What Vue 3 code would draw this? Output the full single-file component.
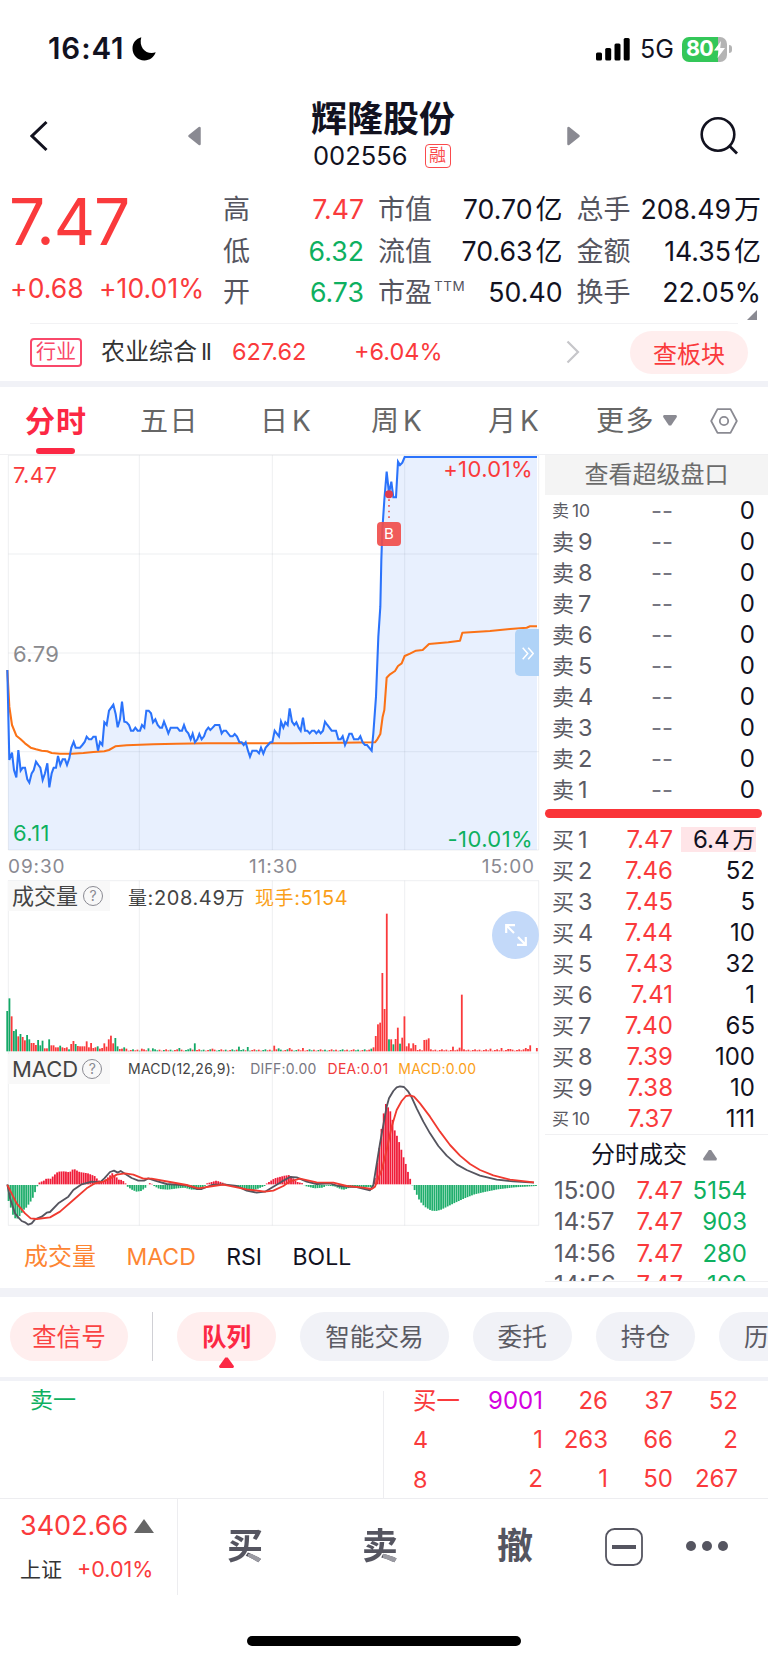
<template>
  <div class="page">
    <!-- Status bar -->
    <div class="status">
      <span class="clock">16:41</span>
      <svg class="moon" width="24" height="24" viewBox="0 0 24 24">
        <path d="M9.300 0.300C4 1.600 0.500 6 0.500 11.600c0 6.700 5.200 11.900 11.900 11.900 5.200 0 9.700-3.300 11.300-8.200C15.500 18.500 6.200 11.500 9.300.3z" fill="#000" />
      </svg>
      <svg class="signal" width="34" height="23" viewBox="0 0 34 23">
        <rect x="0" y="14.500" width="6" height="8" rx="1.500" />
        <rect x="9.200" y="10" width="6" height="12.500" rx="1.500" />
        <rect x="18.500" y="5.500" width="6" height="17" rx="1.500" />
        <rect x="27.700" y="0" width="6" height="22.500" rx="1.500" />
      </svg>
      <span class="network">5G</span>
      <span class="battery">
        80<svg width="11" height="17" viewBox="0 0 11 17"><path d="M7 0L0 9.500h4.600L3.500 17 11 7H6.200z" fill="#fff" /></svg>
      </span>
      <i class="battery-tip"></i>
    </div>

    <!-- Stock title -->
    <header class="nav">
      <svg class="back" width="18" height="32" viewBox="0 0 18 32">
        <path d="M16.500 2L2 16l14.500 14" fill="none" stroke="#12121f" stroke-width="3" />
      </svg>
      <svg class="prev" width="13" height="20" viewBox="0 0 13 20">
        <path d="M11.500 2V18L1.500 10z" fill="#8a8a92" stroke="#8a8a92" stroke-width="2.500" stroke-linejoin="round" />
      </svg>
      <div class="title">
        <h1>辉隆股份</h1>
        <div class="code">002556<span class="margin-tag">融</span></div>
      </div>
      <svg class="next" width="13" height="20" viewBox="0 0 13 20">
        <path d="M1.500 2V18L11.500 10z" fill="#8a8a92" stroke="#8a8a92" stroke-width="2.500" stroke-linejoin="round" />
      </svg>
      <svg class="search" width="38" height="40" viewBox="0 0 38 40">
        <circle cx="18" cy="18.500" r="16.300" fill="none" stroke="#12121f" stroke-width="2.600" />
        <path d="M29 29.500l8 8" stroke="#12121f" stroke-width="2.800" />
      </svg>
    </header>

    <!-- Quote -->
    <section class="quote">
      <div class="quote-main">
        <div class="price">7.47</div>
        <div class="change"><span>+0.68</span><span>+10.01%</span></div>
      </div>
      <div class="stats">
        <div v-for="row in stats" :key="row[0].label" class="stats-row">
          <div v-for="cell in row" :key="cell.label" class="stat">
            <span class="stat-label">{{ cell.label }}<sup v-if="cell.sup">{{ cell.sup }}</sup></span>
            <span class="stat-value" :class="cell.tone">{{ cell.value }}<em v-if="cell.unit">{{ cell.unit }}</em></span>
          </div>
        </div>
      </div>
      <i class="corner"></i>
    </section>

    <!-- Industry -->
    <section class="industry">
      <span class="industry-tag">行业</span>
      <span class="industry-name">农业综合<b>II</b></span>
      <span class="industry-index">627.62</span>
      <span class="industry-change">+6.04%</span>
      <svg class="chevron" width="14" height="24" viewBox="0 0 14 24">
        <path d="M1.500 1.500L12 12 1.500 22.500" fill="none" stroke="#c6c6ca" stroke-width="2.200" />
      </svg>
      <button class="plate-btn">查板块</button>
    </section>

    <!-- Period tabs -->
    <nav class="periods">
      <span
        v-for="tab in periods"
        :key="tab"
        class="period"
        :class="{ active: tab === selectedPeriod, k: tab.endsWith('K') }"
        @click="selectedPeriod = tab"
      >{{ tab }}</span>
      <i class="caret-down"></i>
      <svg class="settings" width="28" height="26" viewBox="0 0 28 26">
        <path d="M7.500 1.200h13L26.800 13l-6.300 11.800h-13L1.200 13z" fill="none" stroke="#8a8a92" stroke-width="1.800" stroke-linejoin="round" />
        <circle cx="14" cy="13" r="4.200" fill="none" stroke="#8a8a92" stroke-width="1.800" />
      </svg>
    </nav>

    <main class="market">
      <div class="charts">
        <!-- Intraday price -->
        <div class="price-chart">
          <svg width="540" height="396" viewBox="0 15 1620 1188">
            <polygon :points="areaPoints" fill="#e8f0fe" />
            <path class="grid" d="M25 16H1616V1200H25zM25 312H1616M25 609H1616M25 905H1616M418 16V1200M817 16V1200M1214 16V1200" />
            <polyline :points="averageLine" fill="none" stroke="#fb7216" stroke-width="6.200" stroke-linejoin="round" />
            <polyline :points="priceLine" fill="none" stroke="#2b73fb" stroke-width="6.200" stroke-linejoin="miter" />
            <circle cx="1167" cy="133" r="12" fill="#e23d4c" />
            <path d="M1167 148V210" stroke="#ef5653" stroke-width="5" stroke-dasharray="5 12" />
          </svg>
          <span class="mark top-left">7.47</span>
          <span class="mark mid-left">6.79</span>
          <span class="mark bottom-left">6.11</span>
          <span class="mark top-right">+10.01%</span>
          <span class="mark bottom-right">-10.01%</span>
          <span class="buy-point">B</span>
          <span class="expand-side">
            <svg width="12" height="13" viewBox="0 0 12 13"><path d="M.7.7l5 5.800-5 5.800M6.200.7l5 5.800-5 5.800" fill="none" stroke="#fff" stroke-width="1.500" /></svg>
          </span>
        </div>
        <div class="times"><span>09:30</span><span>11:30</span><span>15:00</span></div>

        <!-- Volume -->
        <div class="sub-chart volume">
          <svg width="540" height="174" viewBox="0 30 1620 522">
            <path class="grid" d="M25 32H1616V549H25zM418 32V549M817 32V549M1214 32V549" />
            <rect
              v-for="bar in volumeBars"
              :key="bar.x"
              :x="bar.x"
              :y="544 - bar.h"
              width="5.400"
              :height="bar.h"
              :fill="bar.up ? '#fa3a3c' : '#13a866'"
            />
          </svg>
          <div class="sub-name">成交量<i class="help">?</i></div>
          <div class="sub-info volume-info"><span><s>量</s>:208.49<s>万</s></span><span class="gold"><s>现手</s>:5154</span></div>
          <span class="fullscreen">
            <svg width="22" height="22" viewBox="0 0 22 22"><path d="M1.200 9V1.200H10M1.500 1.500l7.500 7.500M20.800 13v7.800H12M20.500 20.500L13 13" fill="none" stroke="#fff" stroke-width="2.200" /></svg>
          </span>
        </div>

        <!-- MACD -->
        <div class="sub-chart macd">
          <svg width="540" height="174" viewBox="0 549 1620 522">
            <path class="grid" d="M25 549V1066H1616V549M418 549V1066M817 549V1066M1214 549V1066" />
            <rect
              v-for="bar in macdBars"
              :key="bar.x"
              :x="bar.x"
              :y="bar.v > 0 ? 943 - bar.v : 945"
              width="5.400"
              :height="Math.abs(bar.v)"
              :fill="bar.v > 0 ? '#f01c38' : '#1fae6c'"
            />
            <polyline :points="diffLine" fill="none" stroke="#55555f" stroke-width="5.500" stroke-linejoin="round" />
            <polyline :points="deaLine" fill="none" stroke="#f03a30" stroke-width="5.500" stroke-linejoin="round" />
          </svg>
          <div class="sub-name">MACD<i class="help">?</i></div>
          <div class="sub-info macd-info">
            <span>MACD(12,26,9):</span>
            <span class="gray">DIFF:0.00</span>
            <span class="red">DEA:0.01</span>
            <span class="gold">MACD:0.00</span>
          </div>
        </div>

        <div class="indicators">
          <span class="on cjk">成交量</span>
          <span class="on">MACD</span>
          <span>RSI</span>
          <span>BOLL</span>
        </div>
      </div>

      <!-- Order book -->
      <aside class="book">
        <div class="book-head">查看超级盘口</div>
        <div v-for="n in sellLevels" :key="'s' + n" class="level">
          <span class="level-name" :class="{ small: n === 10 }">卖<b>{{ n }}</b></span>
          <span class="level-price dash">--</span>
          <span class="level-size">0</span>
        </div>
        <div class="ratio"></div>
        <div v-for="(row, i) in buyLevels" :key="'b' + i" class="level">
          <span class="level-name" :class="{ small: i === 9 }">买<b>{{ i + 1 }}</b></span>
          <span class="level-price">{{ row[0] }}</span>
          <span class="level-size" :class="{ flash: i === 0 }">{{ row[1] }}<em v-if="i === 0">万</em></span>
        </div>
        <div class="ticks">
          <div class="ticks-head">分时成交<i class="caret-up"></i></div>
          <div v-for="(tick, i) in ticks" :key="i" class="tick">
            <span class="tick-time">{{ tick[0] }}</span>
            <span class="tick-price">{{ tick[1] }}</span>
            <span class="tick-size">{{ tick[2] }}</span>
          </div>
        </div>
      </aside>
    </main>

    <!-- Function pills -->
    <div class="pills">
      <span class="pill signal-pill">查信号</span>
      <i class="pill-divider"></i>
      <span
        v-for="pill in pills"
        :key="pill"
        class="pill"
        :class="{ active: pill === selectedPill }"
        @click="selectedPill = pill"
      >{{ pill }}</span>
    </div>

    <!-- Order queue -->
    <section class="queue">
      <div class="queue-sell">卖一</div>
      <div class="queue-buy">
        <div v-for="(row, r) in queue" :key="r" class="queue-row">
          <span v-for="(cell, c) in row" :key="c" :class="{ large: cell === '9001' }">{{ cell }}</span>
        </div>
      </div>
    </section>

    <!-- Bottom bar -->
    <footer class="footer">
      <div class="index">
        <div class="index-value">3402.66<i></i></div>
        <div class="index-change">上证<span>+0.01%</span></div>
      </div>
      <span class="trade two-tone">买</span>
      <span class="trade two-tone">卖</span>
      <span class="trade">撤</span>
      <svg class="minus" width="38" height="38" viewBox="0 0 38 38">
        <rect x="1" y="1" width="36" height="36" rx="8.500" fill="none" stroke="#555560" stroke-width="1.800" />
        <path d="M7 19h24" stroke="#555560" stroke-width="4" />
      </svg>
      <svg class="dots" width="42" height="10" viewBox="0 0 42 10">
        <circle cx="5" cy="5" r="5" /><circle cx="21" cy="5" r="5" /><circle cx="37" cy="5" r="5" />
      </svg>
    </footer>
    <div class="home"><i></i></div>
  </div>
</template>

<script setup>
import { ref } from 'vue'

const periods = ['分时', '五日', '日K', '周K', '月K', '更多']
const selectedPeriod = ref('分时')

const pills = ['队列', '智能交易', '委托', '持仓', '历史']
const selectedPill = ref('队列')

const stats = [
  [
    { label: '高', value: '7.47', tone: 'up' },
    { label: '市值', value: '70.70', unit: '亿' },
    { label: '总手', value: '208.49', unit: '万' }
  ],
  [
    { label: '低', value: '6.32', tone: 'down' },
    { label: '流值', value: '70.63', unit: '亿' },
    { label: '金额', value: '14.35', unit: '亿' }
  ],
  [
    { label: '开', value: '6.73', tone: 'down' },
    { label: '市盈', sup: 'TTM', value: '50.40' },
    { label: '换手', value: '22.05%' }
  ]
]

const sellLevels = [10, 9, 8, 7, 6, 5, 4, 3, 2, 1]
const buyLevels = [
  ['7.47', '6.4'],
  ['7.46', '52'],
  ['7.45', '5'],
  ['7.44', '10'],
  ['7.43', '32'],
  ['7.41', '1'],
  ['7.40', '65'],
  ['7.39', '100'],
  ['7.38', '10'],
  ['7.37', '111']
]
const ticks = [
  ['15:00', '7.47', '5154'],
  ['14:57', '7.47', '903'],
  ['14:56', '7.47', '280'],
  ['14:56', '7.47', '100']
]

const queue = [
  ['买一', '9001', '26', '37', '52'],
  ['4', '1', '263', '66', '2'],
  ['8', '2', '1', '50', '267']
]

// Chart units are a third of a pixel
const priceLine =
  '22,660 28,930 36,908 42,960 49,982 55,900 62,962 68,953 75,953 82,988 88,998 95,970 101,961 108,935 115,945 121,953 128,990 135,970 142,940 148,1012 155,970 161,953 168,953 174,918 181,945 188,928 195,928 201,945 208,925 214,893 221,876 227,893 240,893 247,885 254,876 260,860 267,868 274,868 280,860 287,860 294,902 300,876 307,885 313,817 320,825 327,782 340,764 347,792 353,832 360,808 366,755 373,815 380,817 387,825 393,842 400,842 406,833 413,842 420,842 426,825 433,833 439,782 446,782 453,790 459,817 466,808 473,825 480,833 486,833 492,815 499,833 505,850 512,833 532,833 539,842 546,842 552,825 558,842 565,850 572,868 578,851 585,877 592,868 598,852 605,868 612,859 618,842 625,833 631,840 638,833 645,825 658,825 665,850 671,842 678,842 691,859 698,859 704,852 711,860 718,876 725,877 731,885 737,877 744,902 750,920 757,902 770,902 777,910 783,893 790,911 797,893 804,885 811,877 817,877 824,842 830,850 837,859 843,815 850,833 856,817 863,825 869,775 876,815 883,825 889,817 896,833 902,842 909,803 915,842 922,842 929,850 936,842 943,842 949,850 956,842 962,850 969,842 975,815 982,825 995,842 1008,842 1015,868 1022,868 1028,859 1035,885 1042,868 1048,851 1055,851 1062,868 1075,868 1081,859 1088,877 1095,885 1101,885 1115,902 1120,850 1128,740 1135,560 1141,470 1144,330 1147,240 1153,150 1160,65 1167,130 1174,95 1180,142 1188,142 1194,35 1200,45 1207,38 1214,21 1611,21'
const areaPoints = `${priceLine} 1611,1200 25,1200`
const averageLine =
  '22,660 28,770 36,825 49,857 62,868 75,880 92,893 108,898 125,902 142,904 155,909 180,911 215,911 250,909 280,906 313,904 327,900 346,889 380,886 460,883 530,881 620,880 870,880 1030,878 1125,877 1132,868 1141,852 1148,800 1153,780 1160,683 1170,673 1185,663 1194,648 1205,640 1214,618 1230,611 1248,602 1268,600 1287,582 1345,577 1380,572 1387,548 1470,543 1530,537 1580,533 1590,529 1611,529'

const STEP = 6.62
const START = 22

// index: height, negative values are falling minutes
const volumePeaks = {
  0: -121, 1: -159, 2: 105, 3: -61, 4: -66, 5: 45, 6: -52, 7: 43, 8: 33, 9: -49, 10: -36, 11: 25, 12: 25, 13: 19,
  14: -34, 15: -18, 16: -32, 17: 9, 18: 9, 19: -36, 20: 18, 21: 18, 22: 12, 23: 12, 24: -17, 25: 12, 26: 10, 27: 12,
  28: -6, 29: 22, 30: 31, 31: -22, 32: 16, 33: 15, 34: 15, 35: 15, 36: 30, 37: 12, 38: 25, 39: 10, 40: 12, 41: -15,
  42: 8, 43: 10, 44: 24, 45: 14, 46: 36, 47: 47, 48: 24, 49: -40, 50: -15, 51: 7, 52: 8, 53: -12, 54: 8, 61: 8, 64: -9,
  66: -9, 78: -10, 83: -9, 85: -24, 93: 8, 105: -14, 107: -6, 109: -13, 121: 17, 123: -9, 128: 10, 134: 10, 165: -8,
  166: 12, 167: 46, 168: 81, 169: 86, 170: 235, 171: 127, 172: 413, 173: -36, 174: 36, 175: -21, 176: 37, 177: 71,
  178: -23, 179: 41, 180: 105, 181: 15, 182: 24, 183: 9, 184: 24, 185: 19, 189: 34, 190: 35, 191: 39, 202: 14, 205: 11,
  206: 170, 219: 8, 224: 10, 227: 7, 228: 7, 234: 6, 235: 10, 236: 7, 237: 18, 238: 0, 239: 0, 240: 10
}
const volumeBars = []
for (let i = 0; i <= 240; i++) {
  const peak = volumePeaks[i] ?? (2 + ((i * 7) % 5)) * (i < 165 && (i * 5) % 7 > 3 ? -1 : 1)
  volumeBars.push({ x: START - 3 + i * STEP, h: Math.abs(peak), up: peak > 0 })
}

const macdShape = [
  [22, -48], [30, -72], [37, -95], [45, -103], [52, -98], [60, -86], [67, -75], [75, -68], [88, -50], [95, -38],
  [102, -20], [108, -4], [115, 6], [130, 12], [137, 19], [146, 15], [157, 26], [170, 38], [190, 39], [205, 36],
  [217, 47], [235, 37], [260, 33], [280, 25], [292, 12], [305, 8], [317, 18], [334, 34], [347, 20], [355, 12],
  [362, 14], [372, 4], [380, -6], [392, -14], [405, -20], [420, -18], [434, -7], [440, 1], [447, 4], [453, 1],
  [460, -4], [475, -12], [500, -14], [530, -10], [550, -8], [570, -14], [590, -13], [608, -8], [614, 2], [645, 11],
  [662, 6], [680, -2], [720, -8], [745, -18], [768, -12], [790, -3], [797, 3], [820, 18], [850, 26], [865, 28],
  [872, 22], [885, 8], [905, 3], [912, -3], [940, -10], [965, -8], [975, -2], [1000, -4], [1020, -13], [1030, -14],
  [1045, -8], [1070, -6], [1115, -6], [1118, 4], [1121, 20], [1128, 68], [1134, 108], [1141, 168], [1147, 211],
  [1154, 241], [1160, 232], [1167, 220], [1174, 193], [1180, 163], [1187, 146], [1194, 126], [1200, 105],
  [1207, 81], [1214, 60], [1220, 38], [1227, 16], [1233, 0], [1240, -15], [1247, -30], [1255, -47], [1270, -65],
  [1290, -77], [1305, -78], [1320, -74], [1340, -64], [1360, -54], [1390, -40], [1420, -28], [1450, -21],
  [1490, -13], [1540, -7], [1605, -3]
]

/** Value of the MACD histogram at x, read between its two nearest points. */
function macdAt(x) {
  const next = macdShape.findIndex((point) => point[0] >= x)
  if (next <= 0) return macdShape[0][1]
  const [x0, v0] = macdShape[next - 1]
  const [x1, v1] = macdShape[next]
  return v0 + ((v1 - v0) * (x - x0)) / (x1 - x0)
}

const macdBars = []
for (let i = 0; START + i * STEP <= 1605; i++) {
  const x = START + i * STEP
  macdBars.push({ x: x + 1, v: macdAt(x) })
}

const diffLine =
  '22,943 30,985 45,1030 55,1042 65,1053 75,1057 85,1064 95,1060 105,1048 125,1040 140,1028 150,1026 175,1000 205,980 220,960 245,943 275,935 300,937 313,925 330,906 342,902 353,908 362,903 375,911 395,924 415,932 432,932 445,925 465,932 500,942 560,946 590,957 605,957 635,945 670,943 710,948 740,962 770,968 795,965 815,953 845,935 870,921 890,922 920,935 950,942 990,940 1015,948 1070,951 1110,961 1120,945 1140,820 1160,710 1167,685 1180,663 1190,652 1200,649 1212,651 1225,665 1235,682 1250,715 1270,755 1290,790 1315,828 1340,857 1370,883 1400,900 1440,917 1490,929 1540,934 1602,938'
const deaLine =
  '22,945 50,1000 75,1030 92,1045 110,1047 150,1042 180,1025 220,990 260,955 285,940 310,935 330,925 350,914 375,910 400,914 430,926 455,926 510,936 560,945 595,955 640,948 670,944 740,958 795,965 820,962 850,948 870,934 900,926 950,937 1000,938 1040,948 1090,953 1115,957 1125,950 1145,900 1160,840 1175,770 1190,720 1205,693 1218,678 1230,676 1242,680 1260,700 1290,740 1320,785 1350,825 1380,857 1410,882 1440,900 1480,916 1530,929 1602,937'
</script>

<style>
body {
  background: #fff;
}
</style>

<style scoped>
.page {
  width: 768px;
  height: 1663px;
  overflow: hidden;
  background: #fff;
  color: #12121f;
  font-family: Inter, 'Noto Sans CJK SC', sans-serif;
  font-size: 24px;
  line-height: 1;
}
.page * {
  box-sizing: border-box;
}
i,
em {
  font-style: normal;
}
s {
  text-decoration: none;
}
svg {
  display: block;
  flex: none;
}
span {
  white-space: nowrap;
}

/* Status bar */
.status {
  display: flex;
  align-items: center;
  height: 98px;
  padding: 0 41px 0 48px;
}
.clock {
  width: 84px;
  font-size: 29.5px;
  font-weight: 600;
  letter-spacing: 0.9px;
}
.moon {
  margin-right: auto;
}
.network {
  margin-left: 10px;
  width: 33px;
  font-size: 25px;
}
.battery {
  display: flex;
  align-items: center;
  gap: 1px;
  width: 45px;
  height: 25px;
  margin-left: 9px;
  padding-left: 4px;
  border-radius: 7px;
  background: linear-gradient(90deg, #34c759 36px, #b4b4b4 36px);
  color: #fff;
  font-size: 21.5px;
  font-weight: 700;
  letter-spacing: -0.7px;
}
.battery-tip {
  width: 3px;
  height: 8px;
  margin: 0 -5px 0 2px;
  border-radius: 0 3px 3px 0;
  background: #b4b4b4;
}

/* Title */
.nav {
  display: flex;
  align-items: flex-start;
  height: 84px;
  padding-left: 30px;
}
.back {
  margin-top: 22px;
}
.prev {
  margin: 28px 0 0 140px;
}
.title {
  width: 366px;
  padding-left: 110px;
}
h1 {
  margin: 2px 0 0;
  font-size: 36px;
  font-weight: 700;
  line-height: 38px;
}
.code {
  display: flex;
  align-items: center;
  height: 30px;
  margin-top: 3px;
  padding-left: 2px;
  font-size: 25.5px;
}
.margin-tag {
  width: 26px;
  height: 24px;
  margin-left: 17px;
  border: 1.5px solid #fa4a4c;
  border-radius: 4px;
  color: #fa4a4c;
  font-size: 17px;
  line-height: 21px;
  text-align: center;
}
.next {
  margin-top: 28px;
}
.search {
  margin: 18px 0 0 120px;
}

/* Quote */
.quote {
  position: relative;
  display: flex;
  height: 141px;
  padding-left: 10px;
}
.quote-main {
  width: 213px;
  color: #fa3a3c;
}
.price {
  margin: 8px 0 0 -1px;
  font-size: 64px;
  line-height: 64px;
  letter-spacing: -1px;
}
.change {
  display: flex;
  gap: 15px;
  margin-top: 21px;
  font-size: 26.5px;
  letter-spacing: 0.1px;
}
.stats {
  padding-top: 7px;
}
.stats-row {
  display: flex;
  gap: 14px;
  height: 41.4px;
}
.stat {
  display: flex;
  align-items: center;
  justify-content: space-between;
  width: 184.5px;
  font-size: 26.7px;
}
.stat:first-child {
  width: 141px;
}
.stat-label {
  color: #55555f;
  font-size: 27px;
}
.stat-label sup {
  position: relative;
  top: -11px;
  margin-left: 2px;
  font-size: 13.5px;
  letter-spacing: 0.5px;
  vertical-align: baseline;
}
.stat-value em {
  margin-left: 3px;
  font-size: 27px;
}
.up {
  color: #fa3a3c;
}
.down {
  color: #0eb060;
}
.corner {
  position: absolute;
  right: 11px;
  bottom: 3px;
  border: 5px solid transparent;
  border-right-color: #8a8a92;
  border-bottom-color: #8a8a92;
}

/* Industry */
.industry {
  display: flex;
  align-items: center;
  height: 58px;
  margin-left: 30px;
  color: #fa3a3c;
  font-size: 23.5px;
  background: linear-gradient(#f2f2f4, #f2f2f4) no-repeat 0 0 / 708px 1px;
}
.industry-tag {
  width: 52px;
  height: 29px;
  border: 2px solid #f9486a;
  border-radius: 4px;
  color: #f9486a;
  font-size: 20px;
  line-height: 25px;
  text-align: center;
}
.industry-name {
  width: 150px;
  padding-left: 19px;
  color: #333;
  font-size: 24px;
}
.industry-name b {
  margin-left: 4px;
  font-weight: 400;
  font-size: 23px;
  letter-spacing: -1.5px;
}
.industry-index {
  width: 122px;
}
.industry-change {
  width: 212px;
}
.plate-btn {
  width: 118px;
  height: 43px;
  margin-left: 50px;
  padding: 0;
  border: 0;
  border-radius: 22px;
  background: #ffeeee;
  color: #fa3a3c;
  font-family: inherit;
  font-size: 24px;
}

/* Period tabs */
.periods {
  display: flex;
  align-items: center;
  height: 74px;
  border-top: 6px solid #f1f2f7;
  border-bottom: 1px solid #f0f0f2;
  color: #666;
  font-size: 28px;
}
.period {
  width: 114px;
  letter-spacing: 1.5px;
  padding-left: 26px;
  height: 67px;
  line-height: 69px;
}
.period.k {
  padding-left: 25px;
  letter-spacing: 4px;
}
.period:nth-child(2) {
  width: 121px;
}
.period:nth-child(3) {
  width: 111px;
}
.period:nth-child(4) {
  width: 117px;
}
.period:nth-child(5) {
  width: 107px;
}
.period:nth-child(6) {
  width: 93px;
}
.period.active {
  position: relative;
  padding-left: 25px;
  color: #fc2844;
  font-size: 30px;
  font-weight: 700;
  letter-spacing: 1px;
}
.period.active::after {
  content: '';
  position: absolute;
  left: 36px;
  bottom: 0;
  width: 39px;
  height: 6px;
  border-radius: 3px;
  background: #fc2844;
}
.caret-down {
  width: 14px;
  height: 11px;
  background: #8a8a92;
  clip-path: polygon(5% 0, 95% 0, 100% 15%, 58% 96%, 42% 96%, 0 15%);
}
.settings {
  margin-left: 33px;
}

/* Charts */
.market {
  display: flex;
  height: 833px;
}
.charts {
  width: 545px;
}
.grid {
  fill: none;
  stroke: rgba(90, 95, 120, 0.1);
  stroke-width: 3;
}
.price-chart {
  position: relative;
  height: 397px;
}
.mark {
  position: absolute;
  font-size: 22px;
  letter-spacing: 0.4px;
}
.top-left {
  left: 13px;
  top: 9px;
  color: #fa3a3c;
}
.mid-left {
  left: 13px;
  top: 188px;
  color: #8a8a8e;
}
.bottom-left {
  left: 13px;
  top: 367px;
  color: #0eb060;
}
.top-right {
  right: 12px;
  top: 3px;
  color: #fa3a3c;
}
.bottom-right {
  right: 12px;
  top: 373px;
  color: #0eb060;
}
.buy-point {
  position: absolute;
  left: 377px;
  top: 67px;
  width: 24px;
  height: 24px;
  border-radius: 4px;
  background: rgba(240, 78, 76, 0.92);
  color: #fff;
  font-size: 15px;
  line-height: 24px;
  text-align: center;
}
.expand-side {
  position: absolute;
  left: 515px;
  top: 174px;
  width: 24px;
  height: 47px;
  padding: 18px 0 0 7px;
  border-radius: 5px 0 0 5px;
  background: #b0d3f7;
}
.times {
  display: flex;
  justify-content: space-between;
  height: 28px;
  padding: 5px 10px 0 8px;
  color: #8a8a92;
  font-size: 19px;
  letter-spacing: 0.9px;
}
.sub-chart {
  position: relative;
  height: 173px;
}
.sub-name {
  position: absolute;
  left: 8px;
  top: 1px;
  display: flex;
  align-items: center;
  width: 102px;
  height: 30px;
  padding-left: 4px;
  background: #f8f8f8;
  color: #444;
  font-size: 22px;
}
.help {
  width: 20px;
  height: 20px;
  margin-left: 5px;
  border: 1.5px solid #8a8a92;
  border-radius: 50%;
  color: #8a8a92;
  font-size: 14px;
  line-height: 17px;
  text-align: center;
}
.sub-info {
  position: absolute;
  left: 128px;
  display: flex;
  color: #444;
}
.volume-info {
  top: 8px;
  gap: 10px;
  font-size: 20px;
  letter-spacing: 0.6px;
}
.volume-info s {
  font-size: 19px;
}
.macd-info {
  top: 9px;
  gap: 15px;
  font-size: 14px;
  letter-spacing: 0.23px;
}
.macd-info .gray {
  color: #777782;
}
.macd-info .red {
  color: #f03a3c;
  margin-left: -4px;
}
.gold {
  color: #faa019;
}
.macd-info .gold {
  margin-left: -5px;
}
.macd .help {
  margin-left: 4px;
}
.fullscreen {
  position: absolute;
  left: 492px;
  top: 31px;
  width: 47px;
  height: 48px;
  padding: 13px;
  border-radius: 50%;
  background: #c3d9f9;
}
.indicators {
  display: flex;
  gap: 30.5px;
  padding: 19px 0 0 24px;
  font-size: 23px;
  align-items: center;
}
.indicators .on {
  color: #fd8533;
}
.indicators .cjk {
  font-size: 24px;
}

/* Order book */
.book {
  width: 223px;
}
.book-head {
  height: 40px;
  background: #f4f4f4;
  color: #6b6b6b;
  font-size: 24px;
  line-height: 39px;
  text-align: center;
}
.level {
  display: flex;
  align-items: center;
  height: 31px;
  padding-left: 7px;
}
.level-name {
  width: 51px;
  color: #5b5b64;
  font-size: 22px;
}
.level-name b {
  margin-left: 4px;
  font-size: 23.5px;
  font-weight: 400;
}
.level-name.small {
  font-size: 17px;
}
.level-name.small b {
  margin-left: 3px;
  font-size: 17.5px;
}
.level-price {
  width: 70px;
  color: #fa3a3c;
  text-align: right;
}
.level-price.dash {
  color: #777782;
}
.level-size {
  width: 75px;
  height: 25px;
  margin-left: 8px;
  padding-right: 1px;
  line-height: 25px;
  text-align: right;
}
.level-size em {
  margin-left: 3px;
  font-size: 22.5px;
}
.level-size.flash {
  background: #ffe5e8;
}
.ratio {
  width: 217px;
  height: 9px;
  margin: 4px 0 6px;
  border-radius: 5px;
  background: #fa3438;
}
.ticks {
  height: 148px;
  overflow: hidden;
  border-top: 1px solid #f0f0f2;
  border-bottom: 1px solid #f0f0f2;
}
.ticks-head {
  display: flex;
  align-items: center;
  height: 40px;
  padding-left: 46px;
}
.caret-up {
  width: 14px;
  height: 11px;
  margin-left: 16px;
  background: #8a8a92;
  clip-path: polygon(42% 4%, 58% 4%, 100% 85%, 95% 100%, 5% 100%, 0 85%);
}
.tick {
  display: flex;
  align-items: center;
  height: 31.5px;
  padding-left: 9px;
  color: #5b5b64;
}
.tick-time {
  width: 68px;
}
.tick-price {
  width: 61px;
  color: #fa3a3c;
  text-align: right;
}
.tick-size {
  width: 64px;
  color: #0eb060;
  text-align: right;
}

/* Pills */
.pills {
  display: flex;
  gap: 24px;
  height: 93px;
  padding: 15px 0 0 10px;
  border-top: 9px solid #f1f2f7;
  border-bottom: 4px solid #f1f2f7;
  overflow: hidden;
}
.pill {
  position: relative;
  flex: none;
  height: 49px;
  padding: 0 25px;
  border-radius: 25px;
  background: #f1f2f7;
  color: #5b5b64;
  font-size: 24.6px;
  line-height: 51px;
}
.signal-pill {
  width: 118px;
  padding: 0 22px;
  background: #ffeeee;
  color: #fa4343;
}
.pill-divider {
  flex: none;
  width: 1px;
  height: 49px;
  background: #d0d0d5;
}
.pill.active {
  background: #ffeeee;
  color: #fc2844;
  font-weight: 700;
}
.pill.active::after {
  content: '';
  position: absolute;
  left: 42px;
  bottom: -7px;
  width: 15px;
  height: 11px;
  background: #fc2844;
  clip-path: polygon(42% 4%, 58% 4%, 100% 85%, 95% 100%, 5% 100%, 0 85%);
}

/* Queue */
.queue {
  display: flex;
  height: 118px;
  border-bottom: 1px solid #ededf0;
}
.queue-sell {
  width: 383px;
  padding: 8px 0 0 30px;
  color: #0eb060;
  font-size: 23px;
}
.queue-buy {
  height: 108px;
  margin-top: 10px;
  padding-left: 29px;
  border-left: 1px solid #ededf0;
  color: #fa3a3c;
}
.queue-row {
  display: flex;
  align-items: center;
  height: 39.4px;
  position: relative;
  top: -10px;
}
.queue-row span {
  width: 65px;
  text-align: right;
}
.queue-row span:first-child {
  font-size: 23.4px;
  text-align: left;
}

.queue-row .large {
  color: #d400e0;
}

/* Bottom bar */
.footer {
  display: flex;
  height: 96px;
  color: #555560;
}
.index {
  width: 178px;
  padding: 13px 0 0 20px;
  border-right: 1px solid #ededf0;
}
.index-value {
  display: flex;
  align-items: center;
  color: #fa3a3c;
  font-size: 27px;
}
.index-value i {
  margin-left: 6px;
  border: 10px solid transparent;
  border-top: 0;
  border-bottom: 14px solid #666;
}
.index-change {
  display: flex;
  align-items: center;
  margin-top: 20px;
  color: #333;
  font-size: 21px;
}
.index-change span {
  margin-left: 15px;
  color: #fa3a3c;
  font-size: 21.5px;
}
.trade {
  width: 36px;
  height: 36px;
  margin: 29px 0 0 49px;
  font-size: 36px;
  font-weight: 700;
  line-height: 36px;
}
.trade + .trade {
  margin-left: 99px;
}
.two-tone {
  background: linear-gradient(#9b9ba3, #9b9ba3) no-repeat 100% 100% / 42% 28%, #555560;
  background-clip: text;
  color: transparent;
}
.minus {
  margin: 29px 0 0 72px;
}
.dots {
  margin: 42px 0 0 43px;
  fill: #555560;
}
.home {
  height: 68px;
  padding: 41px 0 0 247px;
}
.home i {
  display: block;
  width: 274px;
  height: 10px;
  border-radius: 5px;
  background: #000;
}
</style>
